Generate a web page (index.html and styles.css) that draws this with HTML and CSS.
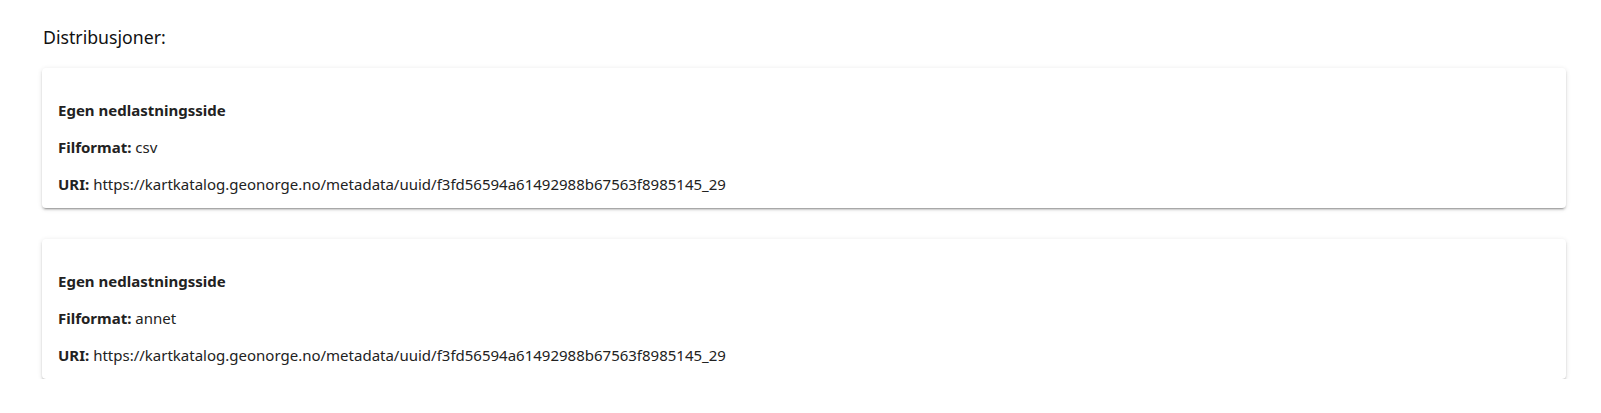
FILE: index.html
```html
<!DOCTYPE html>
<html lang="no">
<head>
<meta charset="utf-8">
<title>Distribusjoner</title>
<link rel="stylesheet" href="styles.css">
</head>
<body>
<main class="page">
  <h2 class="title">Distribusjoner:</h2>
  <div class="list">
    <section class="card">
      <p class="name">Egen nedlastningsside</p>
      <p><strong>Filformat:</strong> csv</p>
      <p><strong>URI:</strong> https://kartkatalog.geonorge.no/metadata/uuid/f3fd56594a61492988b67563f8985145_29</p>
    </section>
    <section class="card">
      <p class="name">Egen nedlastningsside</p>
      <p><strong>Filformat:</strong> annet</p>
      <p><strong>URI:</strong> https://kartkatalog.geonorge.no/metadata/uuid/f3fd56594a61492988b67563f8985145_29</p>
    </section>
  </div>
</main>
</body>
</html>
```

FILE: styles.css
```css
html, body {
  margin: 0;
  padding: 0;
  background: #fff;
}
body {
  font-family: "Noto Sans", "Open Sans", sans-serif;
  color: #1a1a1a;
}
.page {
  padding: 25px 35px 0 42px;
}
.title {
  margin: 0 0 18px 1px;
  font-size: 17.7px;
  font-weight: 400;
  line-height: 25px;
  color: #111;
}
.list {
  display: flex;
  flex-direction: column;
  gap: 31px;
}
.card {
  background: #fff;
  border-radius: 4px;
  padding: 16px 16px 13px;
  box-shadow: 0 3px 1px -2px rgba(0,0,0,.2), 0 2px 2px 0 rgba(0,0,0,.14), 0 1px 5px 0 rgba(0,0,0,.12);
}
.card p {
  margin: 16px 0 0;
  font-size: 15px;
  line-height: 21px;
  color: #222;
}
.card .name {
  font-weight: 700;
}
.card strong {
  font-weight: 700;
}
```
